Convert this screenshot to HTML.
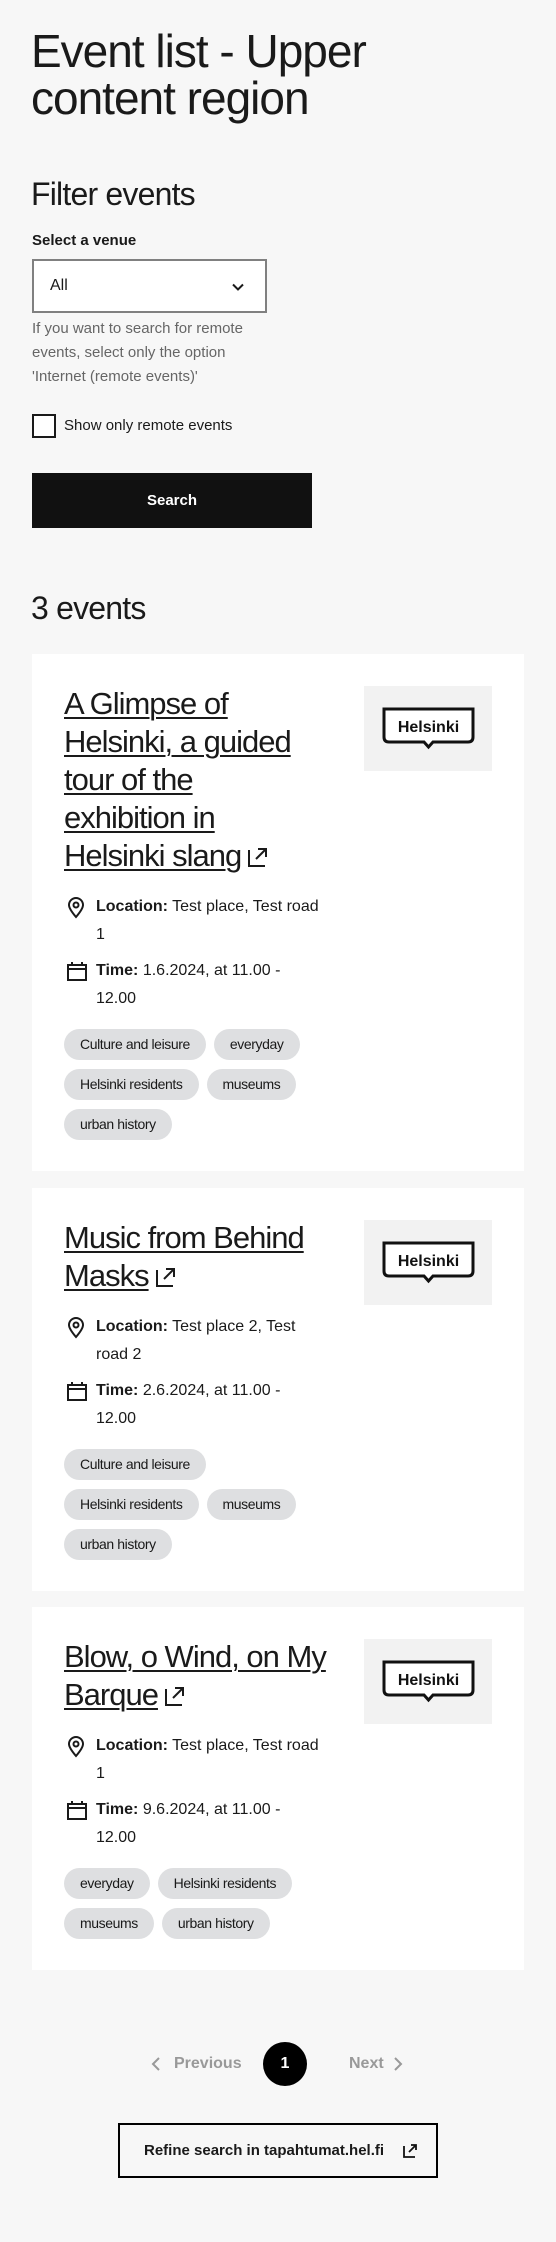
<!DOCTYPE html>
<html><head><meta charset="utf-8">
<style>
*{margin:0;padding:0;box-sizing:border-box}
body{width:556px;height:2242px;background:#f7f7f7;font-family:"Liberation Sans",sans-serif;color:#1a1a1a;position:relative;overflow:hidden}
.abs{position:absolute}
h1{position:absolute;left:31px;top:28px;font-size:46px;line-height:47px;font-weight:400;letter-spacing:-1px;color:#1a1a1a}
.h2{font-size:32px;font-weight:400;letter-spacing:-0.8px;line-height:36px}
.card{position:absolute;left:32px;width:492px;background:#fff;padding:31px 32px 31px 32px}
.card .img{position:absolute;right:32px;top:32px;width:128px;height:85px;background:#f2f2f2;display:flex;align-items:center;justify-content:center}
.title{font-size:31px;line-height:38px;letter-spacing:-1px;white-space:nowrap;width:280px}
.title span{text-decoration:underline;text-decoration-thickness:2px;text-underline-offset:3px}
.title svg{vertical-align:-2px;margin-left:6px}
.row{position:relative;padding-left:32px;font-size:16px;line-height:28px;width:272px}
.row svg{position:absolute;left:2px;top:4px}
.loc{margin-top:18px}
.time{margin-top:8px;width:250px}
.tags{margin-top:16px;display:flex;flex-wrap:wrap;gap:9px 8px;width:262px}
.tag{height:31px;line-height:31px;padding:0 16px;border-radius:16px;background:#dedfe1;font-size:14px;letter-spacing:-0.4px;color:#1a1a1a;white-space:nowrap}
</style></head><body>
<h1>Event list - Upper<br>content region</h1>
<div class="abs h2" style="left:31px;top:176px">Filter events</div>
<div class="abs" style="left:32px;top:232px;font-size:15px;font-weight:700">Select a venue</div>
<div class="abs" style="left:32px;top:259px;width:235px;height:54px;border:2px solid #808080;background:#fff">
 <span class="abs" style="left:16px;top:16px;font-size:16px">All</span>
 <svg class="abs" style="left:196px;top:18px" width="16" height="16" viewBox="0 0 16 16"><path d="M3 5.5 L8 10.5 L13 5.5" fill="none" stroke="#1a1a1a" stroke-width="2"/></svg>
</div>
<div class="abs" style="left:32px;top:317px;width:240px;font-size:15px;line-height:24px;color:#666">If you want to search for remote events, select only the option 'Internet (remote events)'</div>
<div class="abs" style="left:32px;top:414px;width:24px;height:24px;border:2px solid #1a1a1a;background:#fff"></div>
<div class="abs" style="left:64px;top:416px;font-size:15px;line-height:20px">Show only remote events</div>
<div class="abs" style="left:32px;top:473px;width:280px;height:55px;background:#111;color:#fff;font-size:15px;font-weight:700;text-align:center;line-height:55px">Search</div>
<div class="abs h2" style="left:31px;top:590px">3 events</div>

<!-- card 1 -->
<div class="card" style="top:654px">
 <div class="img"><svg width="93" height="44" viewBox="0 0 93 44"><path d="M2 2 H91 V30 Q91 35 86 35 H51 L46.5 40 L42 35 H7 Q2 35 2 30 Z" fill="#fff" stroke="#111" stroke-width="3"/><text x="46.5" y="25" text-anchor="middle" font-family="Liberation Sans" font-weight="700" font-size="16" fill="#111">Helsinki</text></svg></div>
 <div class="title"><span>A Glimpse of</span><br><span>Helsinki, a guided</span><br><span>tour of the</span><br><span>exhibition in</span><br><span>Helsinki slang</span><svg width="22" height="22" viewBox="0 0 22 22"><path d="M2 4 V20 H18 M9 13 L19 3 M11 3 H19 V11" fill="none" stroke="#1a1a1a" stroke-width="2"/></svg></div>
 <div class="row loc"><svg width="20" height="22" viewBox="0 0 20 22"><path d="M10 20 C4 13 3 10 3 8 A7 7 0 0 1 17 8 C17 10 16 13 10 20 Z" fill="none" stroke="#1a1a1a" stroke-width="2"/><circle cx="10" cy="8" r="2.5" fill="none" stroke="#1a1a1a" stroke-width="2"/></svg><b>Location:</b> Test place, Test road<br>1</div>
 <div class="row time"><svg width="22" height="22" viewBox="0 0 22 22"><rect x="2" y="4" width="18" height="15" fill="none" stroke="#1a1a1a" stroke-width="2"/><path d="M2 8 H20 M6 1 V5 M16 1 V5" stroke="#1a1a1a" stroke-width="2"/></svg><b>Time:</b> 1.6.2024, at 11.00 -<br>12.00</div>
 <div class="tags"><span class="tag">Culture and leisure</span><span class="tag">everyday</span><span class="tag">Helsinki residents</span><span class="tag">museums</span><span class="tag">urban history</span></div>
</div>

<!-- card 2 -->
<div class="card" style="top:1188px">
 <div class="img"><svg width="93" height="44" viewBox="0 0 93 44"><path d="M2 2 H91 V30 Q91 35 86 35 H51 L46.5 40 L42 35 H7 Q2 35 2 30 Z" fill="#fff" stroke="#111" stroke-width="3"/><text x="46.5" y="25" text-anchor="middle" font-family="Liberation Sans" font-weight="700" font-size="16" fill="#111">Helsinki</text></svg></div>
 <div class="title"><span>Music from Behind</span><br><span>Masks</span><svg width="22" height="22" viewBox="0 0 22 22"><path d="M2 4 V20 H18 M9 13 L19 3 M11 3 H19 V11" fill="none" stroke="#1a1a1a" stroke-width="2"/></svg></div>
 <div class="row loc"><svg width="20" height="22" viewBox="0 0 20 22"><path d="M10 20 C4 13 3 10 3 8 A7 7 0 0 1 17 8 C17 10 16 13 10 20 Z" fill="none" stroke="#1a1a1a" stroke-width="2"/><circle cx="10" cy="8" r="2.5" fill="none" stroke="#1a1a1a" stroke-width="2"/></svg><b>Location:</b> Test place 2, Test<br>road 2</div>
 <div class="row time"><svg width="22" height="22" viewBox="0 0 22 22"><rect x="2" y="4" width="18" height="15" fill="none" stroke="#1a1a1a" stroke-width="2"/><path d="M2 8 H20 M6 1 V5 M16 1 V5" stroke="#1a1a1a" stroke-width="2"/></svg><b>Time:</b> 2.6.2024, at 11.00 -<br>12.00</div>
 <div class="tags"><span class="tag">Culture and leisure</span><br style="flex-basis:100%"><span class="tag">Helsinki residents</span><span class="tag">museums</span><span class="tag">urban history</span></div>
</div>

<!-- card 3 -->
<div class="card" style="top:1607px">
 <div class="img"><svg width="93" height="44" viewBox="0 0 93 44"><path d="M2 2 H91 V30 Q91 35 86 35 H51 L46.5 40 L42 35 H7 Q2 35 2 30 Z" fill="#fff" stroke="#111" stroke-width="3"/><text x="46.5" y="25" text-anchor="middle" font-family="Liberation Sans" font-weight="700" font-size="16" fill="#111">Helsinki</text></svg></div>
 <div class="title"><span>Blow, o Wind, on My</span><br><span>Barque</span><svg width="22" height="22" viewBox="0 0 22 22"><path d="M2 4 V20 H18 M9 13 L19 3 M11 3 H19 V11" fill="none" stroke="#1a1a1a" stroke-width="2"/></svg></div>
 <div class="row loc"><svg width="20" height="22" viewBox="0 0 20 22"><path d="M10 20 C4 13 3 10 3 8 A7 7 0 0 1 17 8 C17 10 16 13 10 20 Z" fill="none" stroke="#1a1a1a" stroke-width="2"/><circle cx="10" cy="8" r="2.5" fill="none" stroke="#1a1a1a" stroke-width="2"/></svg><b>Location:</b> Test place, Test road<br>1</div>
 <div class="row time"><svg width="22" height="22" viewBox="0 0 22 22"><rect x="2" y="4" width="18" height="15" fill="none" stroke="#1a1a1a" stroke-width="2"/><path d="M2 8 H20 M6 1 V5 M16 1 V5" stroke="#1a1a1a" stroke-width="2"/></svg><b>Time:</b> 9.6.2024, at 11.00 -<br>12.00</div>
 <div class="tags"><span class="tag">everyday</span><span class="tag">Helsinki residents</span><span class="tag">museums</span><span class="tag">urban history</span></div>
</div>

<!-- pagination -->
<svg class="abs" style="left:150px;top:2056px" width="12" height="16" viewBox="0 0 12 16"><path d="M9 2 L3 8 L9 14" fill="none" stroke="#999" stroke-width="2"/></svg>
<div class="abs" style="left:174px;top:2054px;font-size:16px;color:#999;font-weight:700;line-height:20px">Previous</div>
<div class="abs" style="left:263px;top:2042px;width:44px;height:44px;border-radius:50%;background:#000;color:#fff;font-weight:700;font-size:16px;text-align:center;line-height:44px">1</div>
<div class="abs" style="left:349px;top:2054px;font-size:16px;color:#999;font-weight:700;line-height:20px">Next</div>
<svg class="abs" style="left:392px;top:2056px" width="12" height="16" viewBox="0 0 12 16"><path d="M3 2 L9 8 L3 14" fill="none" stroke="#999" stroke-width="2"/></svg>

<div class="abs" style="left:118px;top:2123px;width:320px;height:55px;border:2px solid #000;background:#f7f7f7">
 <span class="abs" style="left:24px;top:16px;font-size:15px;font-weight:700;line-height:20px;white-space:nowrap">Refine search in tapahtumat.hel.fi</span>
 <svg class="abs" style="left:282px;top:18px" width="16" height="16" viewBox="0 0 16 16"><path d="M2 3 V14 H13 M7 9 L14 2 M9 2 H14 V7" fill="none" stroke="#111" stroke-width="1.8"/></svg>
</div>
</body></html>
